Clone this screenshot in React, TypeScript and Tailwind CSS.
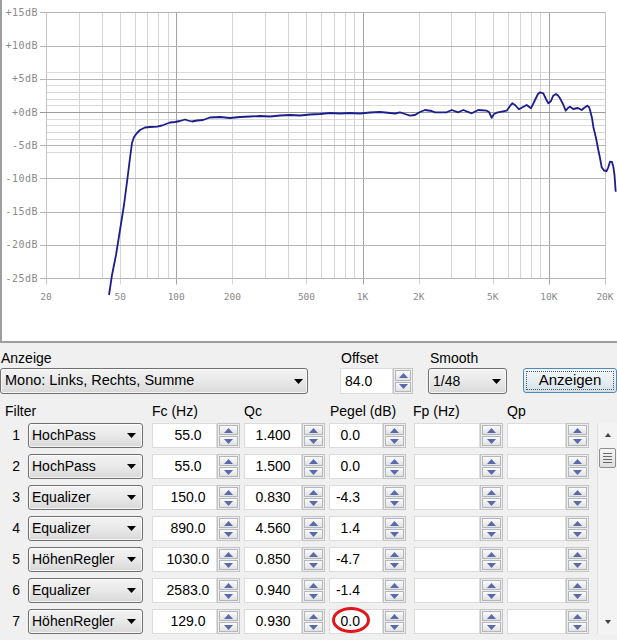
import React from "react";

const fx = (f: number) => 46 + 186.33 * Math.log10(f / 20);
const fy = (db: number) => 112 - 6.64 * db;
const px = (v: number) => Math.round(v) + 0.5;

const CURVE: [number, number][] = [
  [109, 295], [112, 275], [116, 255], [120, 230], [124, 205], [127, 182], [130, 158], [132, 143],
  [134, 137], [137, 133], [140, 130], [145, 127.5], [150, 127], [157, 126.7], [162, 125.5], [166, 124],
  [170, 122.5], [175, 122], [180, 121], [185, 119.5], [188, 120.5], [192, 121.5], [197, 120.5],
  [203, 120], [210, 117.5], [220, 117], [230, 118], [240, 117], [250, 116.5], [260, 116], [270, 116.5],
  [280, 115.5], [290, 115], [300, 115.5], [310, 114.5], [320, 114], [330, 113], [340, 113.5], [350, 113],
  [360, 113.5], [370, 112.5], [380, 112], [390, 113], [395, 113.5], [400, 112.3], [405, 114],
  [410, 115.7], [415, 115], [420, 112], [425, 110], [431.7, 111], [435, 112.3], [446.7, 112.3],
  [451.7, 110], [458.3, 112.3], [463.3, 110], [471.7, 113.3], [478.3, 110], [486.7, 110.7], [489, 112],
  [491.7, 117.7], [494, 114], [496.7, 112.7], [506.7, 110.7], [510, 106], [512.3, 103.3], [515, 105],
  [519, 109.3], [523, 107], [526.7, 105], [531, 108.3], [535, 100], [538, 94], [540, 92.3],
  [543.3, 93.3], [546, 99], [548.3, 103.3], [551, 101], [553, 96], [556, 94], [558, 95.5], [560, 98.3],
  [563, 104], [565.7, 110.7], [568, 108], [570, 106.7], [573.3, 109], [578, 108], [581.7, 110],
  [584, 108], [587.3, 105.7], [589, 107], [590, 110], [592, 118], [593.3, 126.7], [596, 138],
  [598.3, 150], [600, 158], [601.7, 167.3], [604, 170.5], [606.7, 171], [608, 168], [610, 161.7],
  [612, 162], [613.3, 166.7], [614.5, 175], [615.7, 191.7],
];

function Chart() {
  const vf: number[] = [];
  for (let f = 20; f < 100; f += 10) vf.push(f);
  for (let f = 100; f < 1000; f += 100) vf.push(f);
  for (let f = 1000; f < 10000; f += 1000) vf.push(f);
  vf.push(10000, 20000);
  const decade = new Set([100, 1000, 10000]);
  const labeled: [number, string][] = [
    [20, "20"], [50, "50"], [100, "100"], [200, "200"], [500, "500"],
    [1000, "1K"], [2000, "2K"], [5000, "5K"], [10000, "10K"], [20000, "20K"],
  ];
  const labeledSet = new Set(labeled.map((l) => l[0]));
  const majors = [15, 10, 5, 0, -5, -10, -15, -20, -25];
  const minors = [6, 4, 3, 2, 1, -1, -2, -3, -4, -6];
  const yTop = px(fy(15));
  const yBot = px(fy(-25));
  const x0 = px(fx(20));
  const x1 = px(fx(20000));
  const dbLabel = (d: number) => (d > 0 ? `+${d}dB` : d === 0 ? "+0dB" : `-${-d}dB`);
  return (
    <div className="h-[343px] w-full overflow-hidden border-b-2 border-l-2 border-[#9e9e9e] bg-white">
      <svg width={615} height={341} viewBox="2 0 615 341" className="block">
        {minors.map((d) => (
          <line key={"m" + d} x1={x0} x2={x1} y1={px(fy(d))} y2={px(fy(d))} stroke="#d9d9d9" />
        ))}
        {vf.map((f) => {
          const x = px(fx(f));
          const ext = labeledSet.has(f) ? 6 : 0;
          const col = decade.has(f) ? "#a3a3a3" : f === 20 || f === 20000 ? "#c4c4c4" : "#d4d4d4";
          return <line key={"v" + f} x1={x} x2={x} y1={yTop} y2={yBot + ext} stroke={col} />;
        })}
        {majors.map((d) => {
          const y = px(fy(d));
          return (
            <line key={"M" + d} x1={40} x2={x1} y1={y} y2={y} stroke={d === 0 ? "#9a9a9a" : "#b5b5b5"} />
          );
        })}
        {majors.map((d) => (
          <text
            key={"t" + d}
            x={38}
            y={fy(d) + 3.6}
            textAnchor="end"
            fontFamily="DejaVu Sans Mono, monospace"
            fontSize={10}
            letterSpacing={0.5}
            fill="#8a8a8a"
          >
            {dbLabel(d)}
          </text>
        ))}
        {labeled.map(([f, s]) => (
          <text
            key={"x" + f}
            x={fx(f)}
            y={300}
            textAnchor="middle"
            fontFamily="DejaVu Sans Mono, monospace"
            fontSize={9.5}
            fill="#8a8a8a"
          >
            {s}
          </text>
        ))}
        <polyline
          points={CURVE.map((p) => p.join(",")).join(" ")}
          fill="none"
          stroke="#1d1d8c"
          strokeWidth={1.8}
          strokeLinejoin="round"
        />
      </svg>
    </div>
  );
}

function Tri({ down }: { down?: boolean }) {
  return (
    <svg width="9" height="5" viewBox="0 0 9 5" className="block">
      <polygon points={down ? "0,0 9,0 4.5,5" : "0,5 4.5,0 9,5"} fill="#5a68ac" />
    </svg>
  );
}

function SpinBtns({ cls }: { cls: string }) {
  return (
    <div className={`flex h-full flex-col gap-px border border-[#c4c4c4] bg-[#ededed] p-px ${cls}`}>
      <div className="flex flex-1 items-center justify-center border border-[#b2b6bd] bg-gradient-to-b from-[#fbfbfb] to-[#e2e2e2]">
        <Tri />
      </div>
      <div className="flex flex-1 items-center justify-center border border-[#b2b6bd] bg-gradient-to-b from-[#fbfbfb] to-[#e2e2e2]">
        <Tri down />
      </div>
    </div>
  );
}

function Spinner({
  value,
  textCls,
  spinCls,
  children,
}: {
  value: string;
  textCls: string;
  spinCls: string;
  children?: React.ReactNode;
}) {
  return (
    <div className="flex h-[25px]">
      <div className={`relative flex h-full items-center border border-[#dcdcdc] bg-white ${textCls}`}>
        {value}
        {children}
      </div>
      <SpinBtns cls={spinCls} />
    </div>
  );
}

function Combo({ text, cls, textCls, arrowCls }: { text: string; cls: string; textCls: string; arrowCls: string }) {
  return (
    <div
      className={`flex items-center rounded-[3px] border border-[#707070] bg-gradient-to-b from-[#f3f3f3] via-[#e9e9e9] to-[#d8d8d8] shadow-[inset_0_0_0_1px_rgba(255,255,255,0.75)] ${cls}`}
    >
      <span className={`flex-1 whitespace-nowrap ${textCls}`}>{text}</span>
      <svg width="9" height="5" viewBox="0 0 9 5" className={`block ${arrowCls}`}>
        <polygon points="0,0 9,0 4.5,5" fill="#000" />
      </svg>
    </div>
  );
}

const ROWS: [number, string, string, string, string][] = [
  [1, "HochPass", "55.0", "1.400", "0.0"],
  [2, "HochPass", "55.0", "1.500", "0.0"],
  [3, "Equalizer", "150.0", "0.830", "-4.3"],
  [4, "Equalizer", "890.0", "4.560", "1.4"],
  [5, "HöhenRegler", "1030.0", "0.850", "-4.7"],
  [6, "Equalizer", "2583.0", "0.940", "-1.4"],
  [7, "HöhenRegler", "129.0", "0.930", "0.0"],
];

function Scrollbar() {
  return (
    <div className="ml-[8px] flex w-[20px] flex-col items-center border-l border-[#e0e0e0] bg-[#f3f3f3] pb-[10px] pt-[10px]">
      <svg width="6" height="4" viewBox="0 0 6 4" className="block">
        <polygon points="0,4 3,0 6,4" fill="#404040" />
      </svg>
      <div className="mt-[11px] flex h-[20px] w-[17px] flex-col items-center justify-center gap-[2px] rounded-[2px] border border-[#8f8f8f] bg-gradient-to-b from-[#f6f6f6] to-[#dedede]">
        <div className="h-px w-[9px] bg-[#6a6a6a]" />
        <div className="h-px w-[9px] bg-[#6a6a6a]" />
        <div className="h-px w-[9px] bg-[#6a6a6a]" />
        <div className="h-px w-[9px] bg-[#6a6a6a]" />
      </div>
      <div className="flex-1" />
      <svg width="6" height="4" viewBox="0 0 6 4" className="block">
        <polygon points="0,0 6,0 3,4" fill="#404040" />
      </svg>
    </div>
  );
}

export default function App() {
  return (
    <div className="h-[640px] w-[617px] overflow-hidden bg-[#f0f0f0] font-['Liberation_Sans',Arial,sans-serif] text-[14px] text-black">
      <Chart />
      <div className="flex items-end pt-[7px]">
        <div className="flex w-[308px] flex-col">
          <div className="h-[17px] pl-[1px] leading-[17px]">Anzeige</div>
          <Combo
            text="Mono: Links, Rechts, Summe"
            cls="mt-[1px] h-[26px] w-[308px]"
            textCls="pl-[4px] text-[14.5px]"
            arrowCls="mr-[4px]"
          />
        </div>
        <div className="ml-[32px] flex flex-col">
          <div className="h-[17px] pl-[1px] leading-[17px]">Offset</div>
          <div className="mt-[1px] flex h-[26px]">
            <div className="flex h-full w-[53px] items-center border border-[#dcdcdc] bg-white pl-[4px]">84.0</div>
            <SpinBtns cls="w-[20px]" />
          </div>
        </div>
        <div className="ml-[15px] flex flex-col">
          <div className="h-[17px] pl-[2px] leading-[17px]">Smooth</div>
          <Combo text="1/48" cls="mt-[1px] h-[26px] w-[79px]" textCls="pl-[4px]" arrowCls="mr-[5px]" />
        </div>
        <div className="mb-[1px] ml-[16px] flex h-[25px] w-[94px] rounded-[3px] border border-[#4a8cbf] bg-gradient-to-b from-[#f2f6f9] via-[#e6eef3] to-[#d3e0e9] p-[2px]">
          <div className="flex flex-1 items-center justify-center border border-dotted border-[#555] text-[15px]">
            Anzeigen
          </div>
        </div>
      </div>

      <div className="mt-[9px] flex h-[17px] leading-[17px]">
        <div className="w-[152px] pl-[5px]">Filter</div>
        <div className="w-[92px]">Fc (Hz)</div>
        <div className="w-[86px]">Qc</div>
        <div className="w-[83px]">Pegel (dB)</div>
        <div className="w-[94px]">Fp (Hz)</div>
        <div>Qp</div>
      </div>

      <div className="mt-[3px] flex">
        <div className="flex w-[589px] flex-col gap-[6px]">
          {ROWS.map(([n, type, fc, qc, pegel]) => (
            <div key={n} className="flex h-[25px] items-center">
              <div className="w-[28px] pr-[8px] text-right">{n}</div>
              <Combo text={type} cls="h-[25px] w-[115px]" textCls="pl-[3px]" arrowCls="mr-[6px]" />
              <div className="ml-[9px]">
                <Spinner value={fc} textCls="w-[65px] justify-center pl-[7px]" spinCls="w-[23px]" />
              </div>
              <div className="ml-[4px]">
                <Spinner value={qc} textCls="w-[58px] justify-center" spinCls="w-[23px]" />
              </div>
              <div className="ml-[4px]">
                <Spinner value={pegel} textCls="w-[54px] justify-end pr-[22px]" spinCls="w-[23px]">
                  {n === 7 && (
                    <div className="absolute left-[2px] top-[-3px] h-[26px] w-[38px] rounded-[50%] border-[3px] border-[#e3161b]" />
                  )}
                </Spinner>
              </div>
              <div className="ml-[8px]">
                <Spinner value="" textCls="w-[66px]" spinCls="w-[23px]" />
              </div>
              <div className="ml-[4px]">
                <Spinner value="" textCls="w-[59px]" spinCls="w-[23px]" />
              </div>
            </div>
          ))}
        </div>
        <Scrollbar />
      </div>
    </div>
  );
}
